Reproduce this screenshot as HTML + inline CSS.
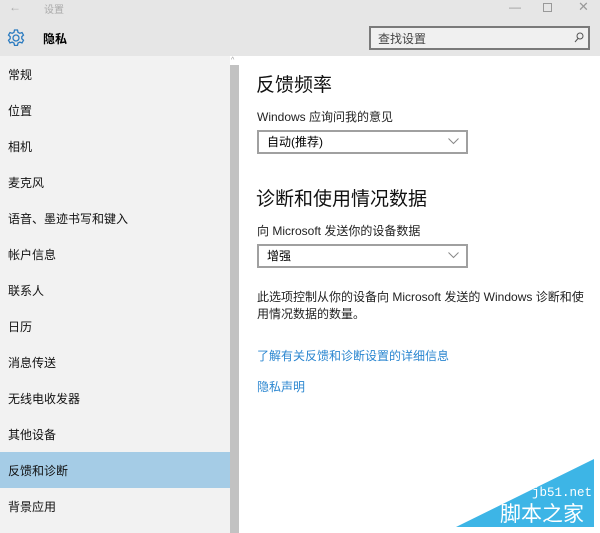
<!DOCTYPE html>
<html><head><meta charset="utf-8"><style>
*{margin:0;padding:0;box-sizing:border-box}
body{width:600px;height:533px;overflow:hidden;background:#fff;font-family:"Liberation Sans","Noto Sans CJK SC",sans-serif;position:relative;color:#000}
.a{position:absolute}
.hdr{left:0;top:0;width:600px;height:56px;background:#e6e6e6}
.side{left:0;top:56px;width:230px;height:477px;background:#f2f2f2}
.item{position:absolute;left:8px;font-size:12px;color:#111}
.sel{left:0;top:452px;width:230px;height:36px;background:#a5cce6}
.sb{left:230px;top:65px;width:9px;height:468px;background:#c2c2c2}
.dd{position:absolute;left:257px;width:211px;height:24px;border:2px solid #a0a0a0;background:#fff;font-size:12px;padding:1px 0 0 8px}
.dd svg{position:absolute;right:7px;top:6px}
.t{position:absolute;left:257px;font-size:12px;color:#222}
.h{position:absolute;left:256px;font-size:19px;color:#111}
.lk{position:absolute;left:257px;font-size:12px;color:#2a86d0}
</style></head><body>
<div class="a hdr"></div>
<div class="a" style="left:9px;top:0px;font-size:12px;color:#aaa">←</div>
<div class="a" style="left:44px;top:1px;font-size:10px;color:#aaa">设置</div>
<div class="a" style="left:509px;top:0px;font-size:12px;color:#999">—</div>
<div class="a" style="left:543px;top:3px;width:9px;height:9px;border:1px solid #999"></div>
<div class="a" style="left:578px;top:-1px;font-size:13px;color:#999">✕</div>
<svg class="a" style="left:6px;top:28px" width="20" height="20" viewBox="0 0 20 20"><g fill="none" stroke="#2b7bc0" stroke-width="1.3"><circle cx="10" cy="10" r="3"/><path d="M8.5 2h3l.5 2.3 1.8 1 2.2-.8 1.5 2.6-1.7 1.6v2l1.7 1.6-1.5 2.6-2.2-.8-1.8 1-.5 2.3h-3l-.5-2.3-1.8-1-2.2.8-1.500-2.6 1.7-1.6v-2L2.5 7.1 4 4.5l2.2.8 1.8-1z"/></g></svg>
<div class="a" style="left:43px;top:30px;font-size:12px;font-weight:bold">隐私</div>
<div class="a" style="left:369px;top:26px;width:221px;height:24px;border:2px solid #7a7a7a;background:#f0f0f0;font-size:12px;color:#444;padding:2px 0 0 7px">查找设置</div>
<svg class="a" style="left:574px;top:32px" width="10" height="11" viewBox="0 0 10 11"><circle cx="6" cy="4" r="3" fill="none" stroke="#555"/><path d="M4 6.5L1 10" stroke="#555"/></svg>
<div class="a side"></div>
<div class="a sel"></div>
<div class="a sb"></div>
<div class="a" style="left:231px;top:57px;font-size:7px;color:#999">^</div>
<div class="item" style="top:66px">常规</div>
<div class="item" style="top:102px">位置</div>
<div class="item" style="top:138px">相机</div>
<div class="item" style="top:174px">麦克风</div>
<div class="item" style="top:210px">语音、墨迹书写和键入</div>
<div class="item" style="top:246px">帐户信息</div>
<div class="item" style="top:282px">联系人</div>
<div class="item" style="top:318px">日历</div>
<div class="item" style="top:354px">消息传送</div>
<div class="item" style="top:390px">无线电收发器</div>
<div class="item" style="top:426px">其他设备</div>
<div class="item" style="top:462px">反馈和诊断</div>
<div class="item" style="top:498px">背景应用</div>
<div class="h" style="top:70px">反馈频率</div>
<div class="t" style="top:108px">Windows 应询问我的意见</div>
<div class="dd" style="top:130px">自动(推荐)<svg width="11" height="7"><path d="M0.5 0.5L5.5 5.5 10.5 0.5" fill="none" stroke="#888"/></svg></div>
<div class="h" style="top:184px">诊断和使用情况数据</div>
<div class="t" style="top:222px">向 Microsoft 发送你的设备数据</div>
<div class="dd" style="top:244px">增强<svg width="11" height="7"><path d="M0.5 0.5L5.5 5.5 10.5 0.5" fill="none" stroke="#888"/></svg></div>
<div class="t" style="top:289px;width:330px;line-height:17px">此选项控制从你的设备向 Microsoft 发送的 Windows 诊断和使用情况数据的数量。</div>
<div class="lk" style="top:347px">了解有关反馈和诊断设置的详细信息</div>
<div class="lk" style="top:378px">隐私声明</div>
<svg class="a" style="left:0;top:0" width="600" height="533"><polygon points="456,527 594,459 594,527" fill="#3db5e6"/></svg>
<div class="a" style="left:532px;top:486px;font-size:12.5px;color:#fff;font-family:'Liberation Mono',monospace">jb51.net</div>
<div class="a" style="left:500px;top:503px;font-size:21px;color:#fff;line-height:23px">脚本之家</div>
</body></html>
